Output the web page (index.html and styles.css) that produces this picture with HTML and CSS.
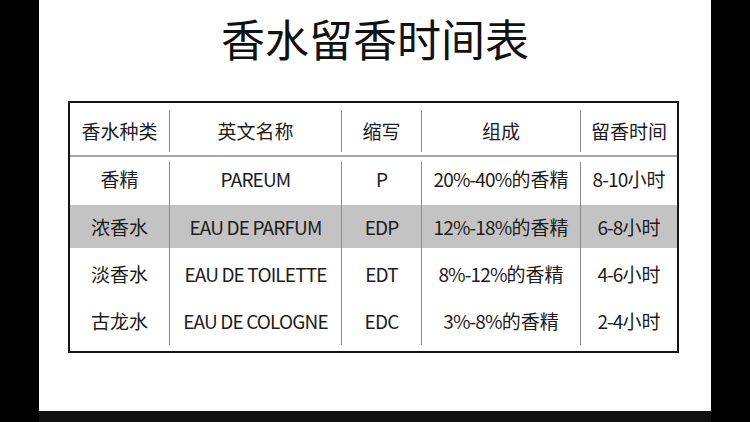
FILE: index.html
```html
<!DOCTYPE html>
<html lang="zh-CN">
<head>
<meta charset="utf-8">
<title>香水留香时间表</title>
<link rel="stylesheet" href="styles.css">
</head>
<body>
<div class="frame">
  <div class="panel">
    <h1 class="title">香水留香时间表</h1>
    <div class="table">
      <div class="row head">
        <div class="cell">香水种类</div>
        <div class="cell">英文名称</div>
        <div class="cell">缩写</div>
        <div class="cell">组成</div>
        <div class="cell last">留香时间</div>
      </div>
      <div class="body">
        <div class="row r1">
          <div class="cell">香精</div>
          <div class="cell"><span class="lat">PAREUM</span></div>
          <div class="cell"><span class="lat">P</span></div>
          <div class="cell"><span class="lat">20%-40%</span>的香精</div>
          <div class="cell last"><span class="lat">8-10</span>小时</div>
        </div>
        <div class="row r2 shaded">
          <div class="cell">浓香水</div>
          <div class="cell"><span class="lat">EAU DE PARFUM</span></div>
          <div class="cell"><span class="lat">EDP</span></div>
          <div class="cell"><span class="lat">12%-18%</span>的香精</div>
          <div class="cell last"><span class="lat">6-8</span>小时</div>
        </div>
        <div class="row r3">
          <div class="cell">淡香水</div>
          <div class="cell"><span class="lat">EAU DE TOILETTE</span></div>
          <div class="cell"><span class="lat">EDT</span></div>
          <div class="cell"><span class="lat">8%-12%</span>的香精</div>
          <div class="cell last"><span class="lat">4-6</span>小时</div>
        </div>
        <div class="row r4">
          <div class="cell">古龙水</div>
          <div class="cell"><span class="lat">EAU DE COLOGNE</span></div>
          <div class="cell"><span class="lat">EDC</span></div>
          <div class="cell"><span class="lat">3%-8%</span>的香精</div>
          <div class="cell last"><span class="lat">2-4</span>小时</div>
        </div>
      </div>
    </div>
  </div>
  <div class="strip"></div>
</div>
</body>
</html>
```
FILE: styles.css
```css
html, body {
  margin: 0;
  padding: 0;
  background: #000;
}
body {
  width: 750px;
  height: 422px;
  overflow: hidden;
  font-family: "Noto Sans CJK SC", "Noto Sans", sans-serif;
  color: #1c1c1c;
}
.frame {
  margin-left: 39px;
  width: 672px;
}
.panel {
  background: #fff;
  height: 411px;
  padding-top: 16px;
  box-sizing: border-box;
}
.strip {
  background: #111;
  height: 11px;
}
.title {
  margin: 0;
  text-align: center;
  font-size: 44px;
  line-height: 44px;
  font-weight: 400;
  color: #111;
  letter-spacing: 0;
}
.table {
  margin: 41px 0 0 29px;
  width: 611px;
  border: 2px solid #141414;
  box-sizing: border-box;
}
.row {
  display: grid;
  grid-template-columns: 100px 172px 80px 159px 96px;
}
.cell {
  display: flex;
  align-items: center;
  justify-content: center;
  font-size: 19px;
  white-space: nowrap;
  border-right: 1px solid #8a8a8a;
  box-sizing: border-box;
}
.lat {
  letter-spacing: -0.85px;
}
.cell.last {
  border-right: none;
}
.head {
  padding: 7px 0 3px;
  border-bottom: 2px solid #a8a8a8;
}
.head .cell {
  height: 42px;
  padding-bottom: 1px;
}
.body {
  padding: 5px 0 6px;
}
.r1 .cell {
  height: 43px;
  padding-bottom: 10px;
}
.r2 .cell {
  height: 43px;
  padding-bottom: 1px;
}
.r3 .cell {
  height: 49px;
  padding-top: 2px;
}
.r4 .cell {
  height: 48px;
  padding-bottom: 2px;
}
.shaded {
  background: #c3c3c3;
}
```
